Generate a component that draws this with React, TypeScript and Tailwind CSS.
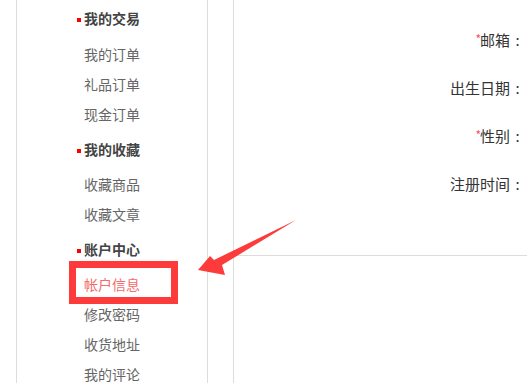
import React from "react";

const FONT = { fontFamily: '"Microsoft YaHei", "Noto Sans CJK SC", sans-serif' };

const GROUPS = [
  { title: "我的交易", items: ["我的订单", "礼品订单", "现金订单"] },
  { title: "我的收藏", items: ["收藏商品", "收藏文章"] },
  { title: "账户中心", items: ["帐户信息", "修改密码", "收货地址", "我的评论"] },
];

const FIELDS = [
  { label: "邮箱", required: true },
  { label: "出生日期", required: false },
  { label: "性别", required: true },
  { label: "注册时间", required: false },
];

function Sidebar() {
  return (
    <aside className="ml-[16px] w-[192px] h-full border-x border-[#dddddd] pt-[3px] flex flex-col gap-[5px] shrink-0">
      {GROUPS.map((group, i) => (
        <div key={group.title}>
          <div
            className={`h-[30px] flex items-center text-[14px] font-bold text-[#444444] ${
              i === 0 ? "mb-[6px]" : "mb-[5px]"
            }`}
          >
            <span className="ml-[60px] mr-[3px] w-[4px] h-[4px] bg-[#ff0000] translate-y-[2px]" />
            {group.title}
          </div>
          {group.items.map((item) => (
            <div
              key={item}
              className={`h-[30px] leading-[30px] pl-[67px] text-[14px] ${
                item === "帐户信息" ? "text-[#f56a6a]" : "text-[#666666]"
              }`}
            >
              {item}
            </div>
          ))}
        </div>
      ))}
    </aside>
  );
}

export default function App() {
  return (
    <div className="relative w-[527px] h-[383px] overflow-hidden bg-white flex" style={FONT}>
      <Sidebar />
      <main className="ml-[25px] flex-1 border-l border-[#dddddd]">
        <div className="h-[256px] border-b border-[#dddddd] pt-[16px] pr-[2px] flex flex-col items-end">
          {FIELDS.map((f) => (
            <div key={f.label} className="h-[48px] leading-[48px] text-[15px] text-[#333333] flex">
              {f.required && (
                <span className="text-[#f0506e] text-[12px] leading-none mt-[17px] mr-[-1px]">*</span>
              )}
              <span>{f.label}</span>
              <span className="inline-block w-[15px] text-center">:</span>
            </div>
          ))}
        </div>
      </main>

      {/* annotation overlay */}
      <div className="absolute left-[69px] top-[261px] w-[109px] h-[43px] border-[7px] border-[#fd3b3b]" />
      <svg className="absolute left-0 top-0" width="527" height="383" viewBox="0 0 527 383">
        <polygon points="296,220 222,265 225,275 198,270 210,256 214,260" fill="#fd3b3b" />
      </svg>
    </div>
  );
}
